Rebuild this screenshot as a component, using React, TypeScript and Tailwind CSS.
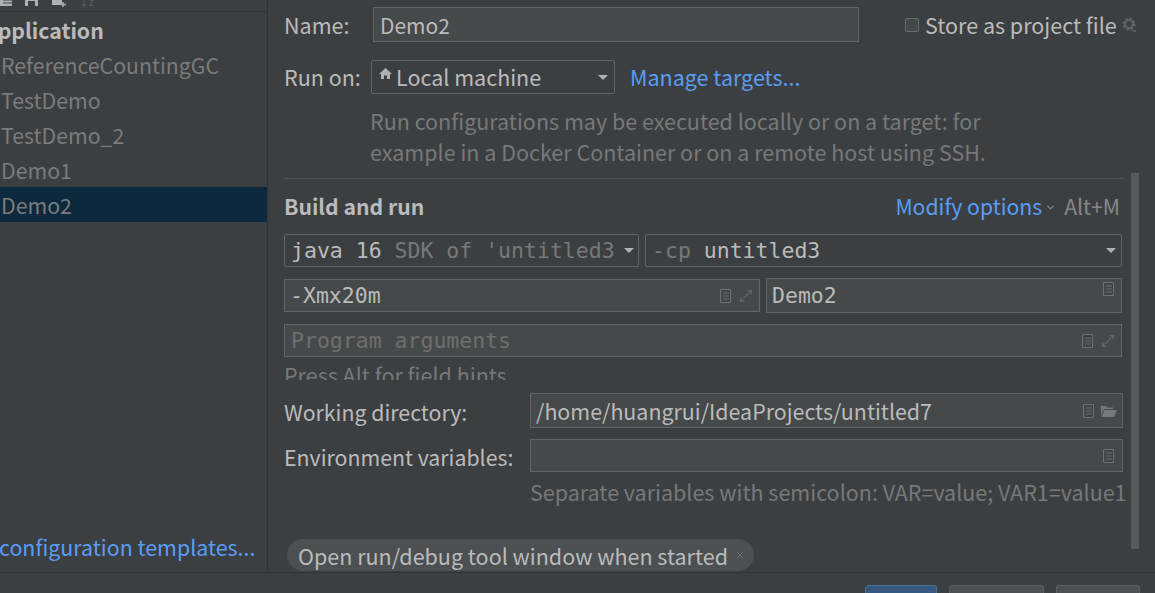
import { ChevronDown, X } from 'lucide-react';
import type { ReactNode } from 'react';

const SANS = 'font-["Noto_Sans_CJK_SC",sans-serif]';
const MONO = 'font-["DejaVu_Sans_Mono",monospace] text-[21.5px]';

const RUN_CONFIGS = ['ReferenceCountingGC', 'TestDemo', 'TestDemo_2', 'Demo1', 'Demo2'];

function DocIcon() {
  return (
    <svg width="12" height="14" viewBox="0 0 12 14" className="shrink-0">
      <path d="M0.5 0.5h10v13h-10z" fill="none" stroke="#6e7173" />
      <path d="M2 1h8v12H2z" fill="#3f4345" />
      <path d="M3 4h6M3 7h6M3 10h6" stroke="#6e7173" />
    </svg>
  );
}

function ExpandIcon() {
  return (
    <svg width="14" height="14" viewBox="0 0 14 14" className="shrink-0">
      <path d="M8 1h5v5zM1 8v5h5z" fill="#5f6365" />
      <path d="M10 4L4 10" stroke="#5f6365" strokeWidth="1.2" />
    </svg>
  );
}

function FolderIcon() {
  return (
    <svg width="16" height="12" viewBox="0 0 16 12" className="shrink-0">
      <path d="M0 1h5l1 1.5h6V4H3L0 11z" fill="#75797b" />
      <path d="M3.5 5H16l-3 7H0.5z" fill="#75797b" />
    </svg>
  );
}

function HomeIcon() {
  return (
    <svg width="13" height="11" viewBox="0 0 13 11" className="mt-[-7px] shrink-0">
      <path d="M6.5 0L13 6h-2v5H8V7.5H5V11H2V6H0z" fill="#afb1b3" />
    </svg>
  );
}

function GearIcon() {
  return (
    <svg width="15" height="16" viewBox="0 0 15 16" className="shrink-0">
      <circle cx="7" cy="7" r="5" fill="none" stroke="#5f6365" strokeWidth="3" strokeDasharray="2.2 1.7" />
      <circle cx="7" cy="7" r="4" fill="none" stroke="#5f6365" strokeWidth="2.2" />
      <path d="M10 13h5l-2.5 2.5z" fill="#5f6365" />
    </svg>
  );
}

function Caret() {
  return (
    <svg width="10" height="5" viewBox="0 0 10 5" className="shrink-0">
      <path d="M0 0h10L5 5z" fill="#afb1b3" />
    </svg>
  );
}

function Field({ className, children }: { className: string; children: ReactNode }) {
  return (
    <div className={`flex items-center border border-[#646464] bg-[#45494a] ${className}`}>
      {children}
    </div>
  );
}

function Dropdown({ className, children }: { className: string; children: ReactNode }) {
  return (
    <div className={`flex items-center rounded-[2px] border border-[#646464] bg-[#3c3f41] ${className}`}>
      {children}
    </div>
  );
}

function Sidebar() {
  return (
    <aside className="flex h-full w-[268px] shrink-0 flex-col border-r border-[#323232]">
      <div className="flex h-[12px] shrink-0 items-end overflow-hidden border-b border-[#323232]">
        <div className="flex gap-[12px] pb-[4px] pl-0">
          <svg width="14" height="9" viewBox="0 0 14 9" className="-ml-[2px]">
            <path d="M0 0h14v9H0z" fill="#afb1b3" />
            <path d="M5 3h9M5 6h9" stroke="#3c3f41" />
          </svg>
          <svg width="13" height="9" viewBox="0 0 13 9" className="ml-[1px]">
            <path d="M0 0h13v9H0z" fill="#afb1b3" />
            <path d="M3 4h7v5H3z" fill="#3c3f41" />
          </svg>
          <svg width="14" height="10" viewBox="0 0 14 10" className="ml-[2px]">
            <path d="M0 0h10v8H0z" fill="#afb1b3" />
            <path d="M11 5v5M9 7.5h5" stroke="#afb1b3" strokeWidth="1.5" />
          </svg>
          <span className={`${SANS} ml-[1px] text-[10px] leading-[10px] text-[#5f6264]`}>↓z</span>
        </div>
      </div>
      <div className={`${SANS} -ml-[16px] flex h-[35px] shrink-0 items-center text-[21.3px] font-bold text-[#bbbbbb]`}>
        Application
      </div>
      <ul className={`${SANS} text-[21.3px] text-[#7b7b7b]`}>
        {RUN_CONFIGS.map((name) => (
          <li
            key={name}
            className={`flex h-[35px] items-center pl-[1px] ${name === 'Demo2' ? 'bg-[#0d293e]' : ''}`}
          >
            {name}
          </li>
        ))}
      </ul>
      <div className="mt-auto flex h-[48px] items-start overflow-hidden whitespace-nowrap">
        <span className={`${SANS} -ml-[1px] text-[21.4px] leading-[46px] text-[#589df6]`}>
          configuration templates...
        </span>
      </div>
    </aside>
  );
}

function Form() {
  return (
    <main className={`${SANS} relative h-full min-w-0 flex-1 overflow-hidden pl-[16px] text-[21.5px] whitespace-nowrap text-[#bbbbbb]`}>
      <div className="mt-[7px] flex h-[35px] items-center">
        <span className="w-[89px] pt-[2px]">Name:</span>
        <Field className="h-[35px] w-[486px] pt-[2px] pl-[6px] text-[21px]">Demo2</Field>
        <span className="ml-[46px] h-[14px] w-[14px] rounded-[2px] border border-[#6b6b6b] bg-[#43494a]" />
        <span className="ml-[6px] pt-[2px]">Store as project file</span>
        <span className="ml-[5px]"><GearIcon /></span>
      </div>

      <div className="mt-[18px] flex h-[34px] items-center">
        <span className="w-[87px]">Run on:</span>
        <Dropdown className="h-[34px] w-[244px] pr-[6px] pl-[7px]">
          <HomeIcon />
          <span className="ml-[4px] flex-1">Local machine</span>
          <Caret />
        </Dropdown>
        <span className="ml-[15px] text-[#589df6]">Manage targets...</span>
      </div>

      <p className="mt-[11px] pl-[86px] leading-[31px] text-[#787878]">
        Run configurations may be executed locally or on a target: for
        <br />
        example in a Docker Container or on a remote host using SSH.
      </p>

      <div className="mt-[11px] mr-[30px] h-px bg-[#4f5254]" />

      <div className="mt-[10px] flex h-[34px] items-center pr-[35px] text-[21.2px]">
        <span className="font-bold">Build and run</span>
        <span className="ml-auto text-[#589df6]">Modify options</span>
        <ChevronDown size={11} strokeWidth={2.5} className="mt-[2px] ml-[3px] text-[#8a8d8f]" />
        <span className="ml-[8px] text-[#878787]">Alt+M</span>
      </div>

      <div className={`${MONO} mt-[11px] flex h-[33px] gap-[6px]`}>
        <Dropdown className="w-[355px] pr-[4px] pl-[6px]">
          <span className="flex-1 overflow-hidden pt-[2px]">
            java 16 <span className="text-[#787878]">SDK of 'untitled3</span>
          </span>
          <Caret />
        </Dropdown>
        <Dropdown className="w-[477px] pr-[5px] pl-[6px]">
          <span className="flex-1 pt-[2px]">
            <span className="text-[#787878]">-cp</span> untitled3
          </span>
          <Caret />
        </Dropdown>
      </div>

      <div className={`${MONO} mt-[11px] flex h-[35px] items-center gap-[6px]`}>
        <Field className="h-[33px] w-[476px] pr-[6px] pl-[5px]">
          <span className="flex-1 pt-[2px]">-Xmx20m</span>
          <DocIcon />
          <span className="ml-[7px]"><ExpandIcon /></span>
        </Field>
        <Field className="h-[35px] w-[356px] items-start pr-[6px] pl-[5px]">
          <span className="flex-1 self-center pt-[2px]">Demo2</span>
          <span className="mt-[3px]"><DocIcon /></span>
        </Field>
      </div>

      <Field className={`${MONO} mt-[11px] h-[33px] w-[838px] pr-[6px] pl-[6px] text-[#6f6f6f]`}>
        <span className="flex-1 pt-[2px]">Program arguments</span>
        <DocIcon />
        <span className="ml-[7px]"><ExpandIcon /></span>
      </Field>

      <div className="h-[23px] overflow-hidden leading-[36px] text-[#787878]">Press Alt for field hints</div>

      <div className="mt-[13px] flex h-[35px] items-center">
        <span className="w-[246px] pt-[2px] text-[21.3px]">Working directory:</span>
        <Field className="h-[35px] w-[593px] pr-[5px] pl-[5px]">
          <span className="flex-1 pt-[2px] text-[21.4px]">/home/huangrui/IdeaProjects/untitled7</span>
          <DocIcon />
          <span className="ml-[6px]"><FolderIcon /></span>
        </Field>
      </div>

      <div className="mt-[11px] flex h-[33px] items-center">
        <span className="w-[246px] pt-[2px] text-[21.3px]">Environment variables:</span>
        <Field className="h-[33px] w-[593px] justify-end pr-[7px]">
          <DocIcon />
        </Field>
      </div>

      <div className="mt-[4px] pl-[246px] leading-[31px] text-[#787878]">
        Separate variables with semicolon: VAR=value; VAR1=value1
      </div>

      <div className="mt-[32px] ml-[3px] flex h-[32px] w-[467px] items-center rounded-full bg-[#4c5052] pl-[11px]">
        <span className="flex-1 pt-[3px]">Open run/debug tool window when started</span>
        <X size={12} className="mr-[8px] text-[#6e7173]" />
      </div>

      {/* scrollbar sits over the form */}
      <div className="absolute top-[173px] left-[863px] h-[376px] w-[8px] bg-[#575a5c]" />
    </main>
  );
}

export default function App() {
  return (
    <div className="flex h-[593px] w-[1155px] flex-col overflow-hidden bg-[#3c3f41]">
      <div className="flex h-[573px] shrink-0 border-b border-[#323232]">
        <Sidebar />
        <Form />
      </div>
      <footer className={`${SANS} flex justify-end gap-[12px] pt-[12px] pr-[15px] text-[21.5px] text-[#bbbbbb]`}>
        <button className="h-[34px] w-[72px] rounded-[3px] border border-[#4c708c] bg-[#365880]">OK</button>
        <button className="h-[34px] w-[95px] rounded-[3px] border border-[#5e6060] bg-[#4c5052]">Cancel</button>
        <button className="h-[34px] w-[84px] rounded-[3px] border border-[#5e6060] bg-[#4c5052]">Apply</button>
      </footer>
    </div>
  );
}
